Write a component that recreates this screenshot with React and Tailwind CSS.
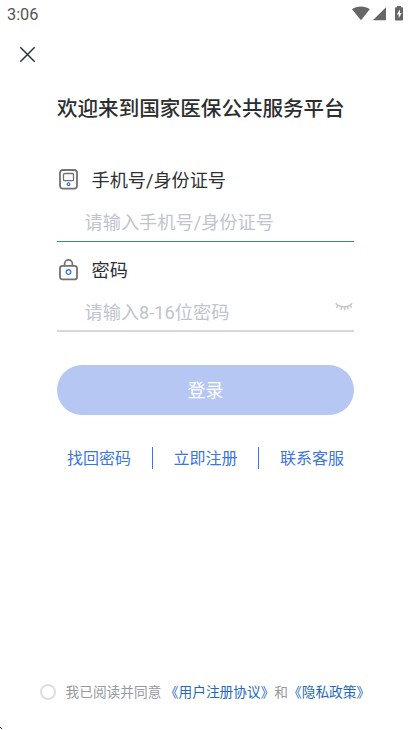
import React from 'react';

function StatusBar() {
  return (
    <div className="flex h-7 shrink-0 items-center justify-between pl-[7px] pr-[7px] text-[#666666]">
      <span className="pt-px font-['Roboto',sans-serif] text-[16.300px] leading-7 text-[#555555]">3:06</span>
      <svg width="54" height="28" viewBox="350 0 54 28" fill="#666">
        <path d="M352 9.2C356.8 5.6 364.8 5.6 369.8 9.2L361 20.3Z" />
        <path d="M386 7.2V20.3H372.8Z" />
        <path fillRule="evenodd" d="M397 6h4v1.3h1.2q.8 0 .8.8v11.6q0 .8-.8.8h-6.4q-.8 0-.8-.8V8.100q0-.8.8-.8h1.200zM400 9.300l-3.200 5.300h1.900v3.700l3-5.200h-1.800z" />
      </svg>
    </div>
  );
}

function PhoneIcon() {
  return (
    <svg width="20" height="22" viewBox="0 0 20 22" fill="none">
      <rect x="1" y="1" width="17" height="18.600" rx="2.800" stroke="#707276" strokeWidth="1.800" />
      <rect x="4.500" y="4.500" width="10" height="7.200" rx="1.200" stroke="#707276" strokeWidth="1.300" />
      <circle cx="9.500" cy="15.200" r="1.300" stroke="#4678f0" strokeWidth="1.300" />
    </svg>
  );
}

function LockIcon() {
  return (
    <svg width="20" height="22" viewBox="0 0 20 22" fill="none">
      <rect x="1" y="6.800" width="17" height="13.600" rx="2.500" stroke="#707276" strokeWidth="1.800" />
      <path d="M5.600 6.600V4.800a3.900 3.900 0 0 1 7.800 0V6.600" stroke="#707276" strokeWidth="1.700" />
      <circle cx="9.500" cy="13.100" r="2.300" stroke="#4678f0" strokeWidth="1.400" />
    </svg>
  );
}

function ClosedEye() {
  return (
    <svg width="18" height="10" viewBox="0 0 18 10" fill="none" stroke="#c4c4c4" strokeWidth="1.400">
      <path d="M.6 1.300C4.500 6 13.500 6 17.200 1.300M3.300 3.400 1.300 5.900M6.700 4.600 5.900 7.900M9.600 4.800V8.200M12.200 4.300l.9 3.100M14.700 3.200l2 2.300" />
    </svg>
  );
}

function Field({ icon, label, placeholder, trailing, line }) {
  return (
    <div className={`flex h-[90px] flex-col pt-[9px] ${line}`}>
      <div className="flex h-[38px] items-center gap-[12.500px] pl-[2px] text-[18.150px] leading-[38px] text-[#2f3033]">
        {icon}
        <span className="pt-[2px]">{label}</span>
      </div>
      <div className="mt-[7px] flex h-[34px] items-center justify-between pl-[27.500px] pr-px text-[18.200px] text-[#c0c4ce]">
        <span>{placeholder}</span>
        {trailing}
      </div>
    </div>
  );
}

export default function App() {
  return (
    <div className="relative flex h-[730px] w-[411px] flex-col overflow-hidden bg-white font-['Roboto','Noto_Sans_CJK_SC',sans-serif]">
      <StatusBar />
      <header className="flex h-[52px] shrink-0 items-center pl-[19px]">
        <svg width="17" height="17" viewBox="0 0 17 17" stroke="#293441" strokeWidth="1.500">
          <path d="M1.300 1.300 15.700 15.700M15.700 1.300 1.300 15.700" />
        </svg>
      </header>
      <main className="flex flex-col px-[57px]">
        <h1 className="mt-[13px] h-8 text-[20.560px] leading-8 font-medium whitespace-nowrap text-[#2d2e30]">
          欢迎来到国家医保公共服务平台
        </h1>
        <section className="mt-[27px] flex flex-col">
          <Field icon={<PhoneIcon />} label="手机号/身份证号" placeholder="请输入手机号/身份证号" line="border-b border-[#4076dc]" />
          <Field
            icon={<LockIcon />}
            label="密码"
            placeholder="请输入8-16位密码"
            trailing={<span className="mb-[13px]"><ClosedEye /></span>}
            line="border-b-2 border-[#d4d7dc]"
          />
        </section>
        <button className="mt-[33px] h-[50px] rounded-full bg-[#b6c7f3] text-[18px] text-white">登录</button>
        <nav className="mt-8 flex h-[22px] items-center justify-between px-[10px] text-[16px] leading-[22px] text-[#3c74e4]">
          <a className="pt-[2px]">找回密码</a>
          <i className="h-[22px] w-px bg-[#3c74e4]" />
          <a className="pt-[2px]">立即注册</a>
          <i className="h-[22px] w-px bg-[#3c74e4]" />
          <a className="pt-[2px]">联系客服</a>
        </nav>
      </main>
      <footer className="mt-auto mb-[26px] flex h-6 items-center pl-10 text-[13.700px] leading-6 whitespace-nowrap text-[#96999f]">
        <span className="mr-[9.500px] size-4 rounded-full border-2 border-[#dcdee3]" />
        <span>我已阅读并同意</span>
        <a className="ml-[3.500px] text-[#1f69bd]">《用户注册协议》</a>
        <span>和</span>
        <a className="text-[#1f69bd]">《隐私政策》</a>
      </footer>
      <svg className="absolute bottom-0 left-0" width="3" height="4" viewBox="0 0 3 4" fill="#222">
        <path d="M0 1h1v1H0zM1 2h1v1H1z" />
      </svg>
    </div>
  );
}
